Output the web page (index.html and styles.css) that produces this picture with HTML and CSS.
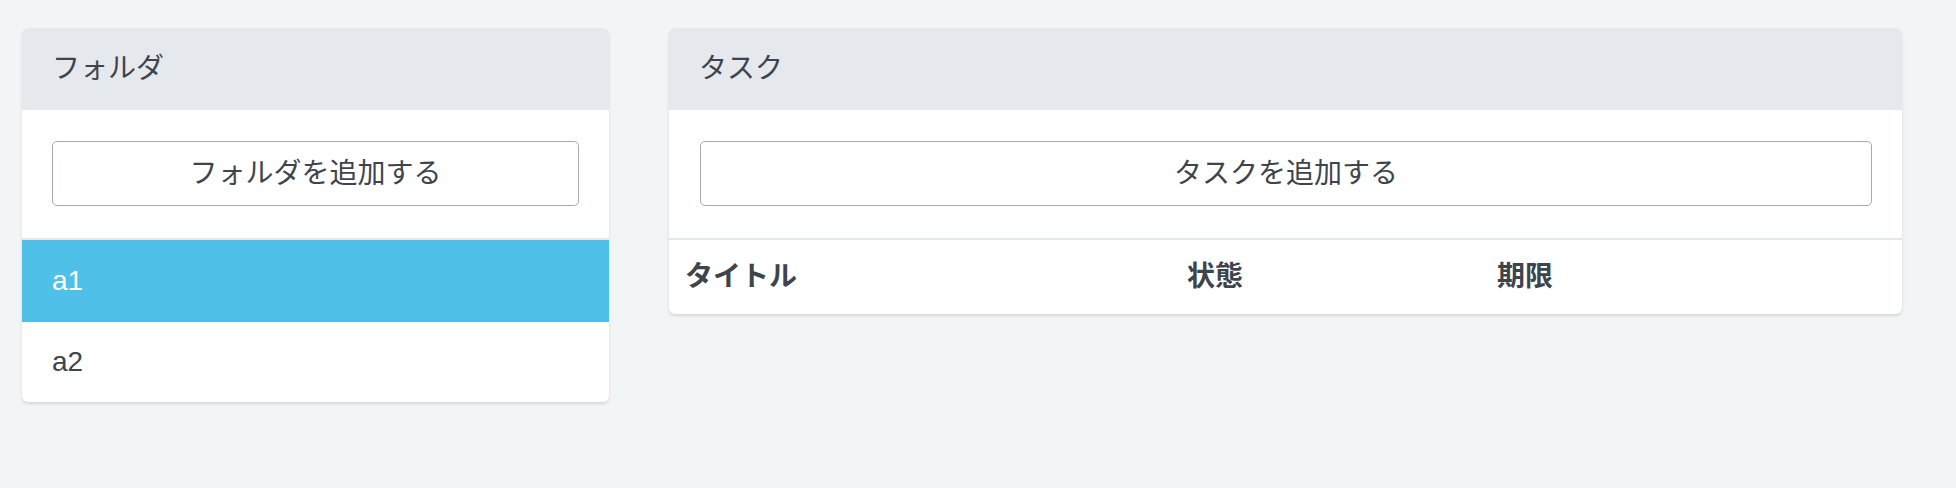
FILE: index.html
```html
<!DOCTYPE html>
<html lang="ja">
<head>
  <meta charset="UTF-8" />
  <title>ToDo</title>
  <link rel="stylesheet" href="styles.css">
</head>
<body>
  <div class="container">
    <div class="panel folders">
      <div class="panel-heading">フォルダ</div>
      <div class="panel-body">
        <button class="btn">フォルダを追加する</button>
      </div>
      <div class="list-group">
        <a class="list-item active">a1</a>
        <a class="list-item">a2</a>
      </div>
    </div>
    <div class="panel tasks">
      <div class="panel-heading">タスク</div>
      <div class="panel-body">
        <button class="btn">タスクを追加する</button>
      </div>
      <table class="table">
        <thead>
          <tr>
            <th class="col-title">タイトル</th>
            <th class="col-status">状態</th>
            <th>期限</th>
          </tr>
        </thead>
      </table>
    </div>
  </div>
</body>
</html>
```

FILE: styles.css
```css
body {
  margin: 0;
  font-family: 'Liberation Sans', 'Noto Sans CJK JP', sans-serif;
  font-size: 28px;
  line-height: 40px;
  color: #3e444c;
  background: #f1f5f6;
}
.container {
  display: flex;
  align-items: flex-start;
  gap: 60px;
  padding: 28px 22px;
}
.panel {
  background: white;
  border-radius: 6px;
  box-shadow: 0 2px 3px rgba(0,0,0,0.12);
}
.folders {
  width: 587px;
  overflow: hidden;
}
.tasks {
  width: 1233px;
}
.panel-heading {
  background: #e5e8ed;
  padding: 21px 30px;
  border-radius: 6px 6px 0 0;
}
.panel-body {
  padding: 31px 30px 32px;
}
.tasks .panel-body {
  padding-left: 31px;
}
.btn {
  display: block;
  width: 100%;
  padding: 11.5px 12px;
  font: inherit;
  color: inherit;
  background: white;
  border: 1px solid #a3abb5;
  border-radius: 5px;
  cursor: pointer;
}
.list-group {
  border-top: 2px solid #e3e8ec;
}
.list-item {
  display: block;
  padding: 21px 30px;
  height: 40px;
}
.list-item + .list-item {
  padding: 20px 30px;
}
.list-item.active {
  background: #4fc0e8;
  color: white;
}
.table {
  width: 100%;
  border-collapse: collapse;
  border-top: 2px solid #e3e8ec;
}
.table th {
  text-align: left;
  font-weight: bold;
  padding: 17px 16px;
}
.col-title {
  width: 470px;
}
.col-status {
  width: 278px;
}
```
